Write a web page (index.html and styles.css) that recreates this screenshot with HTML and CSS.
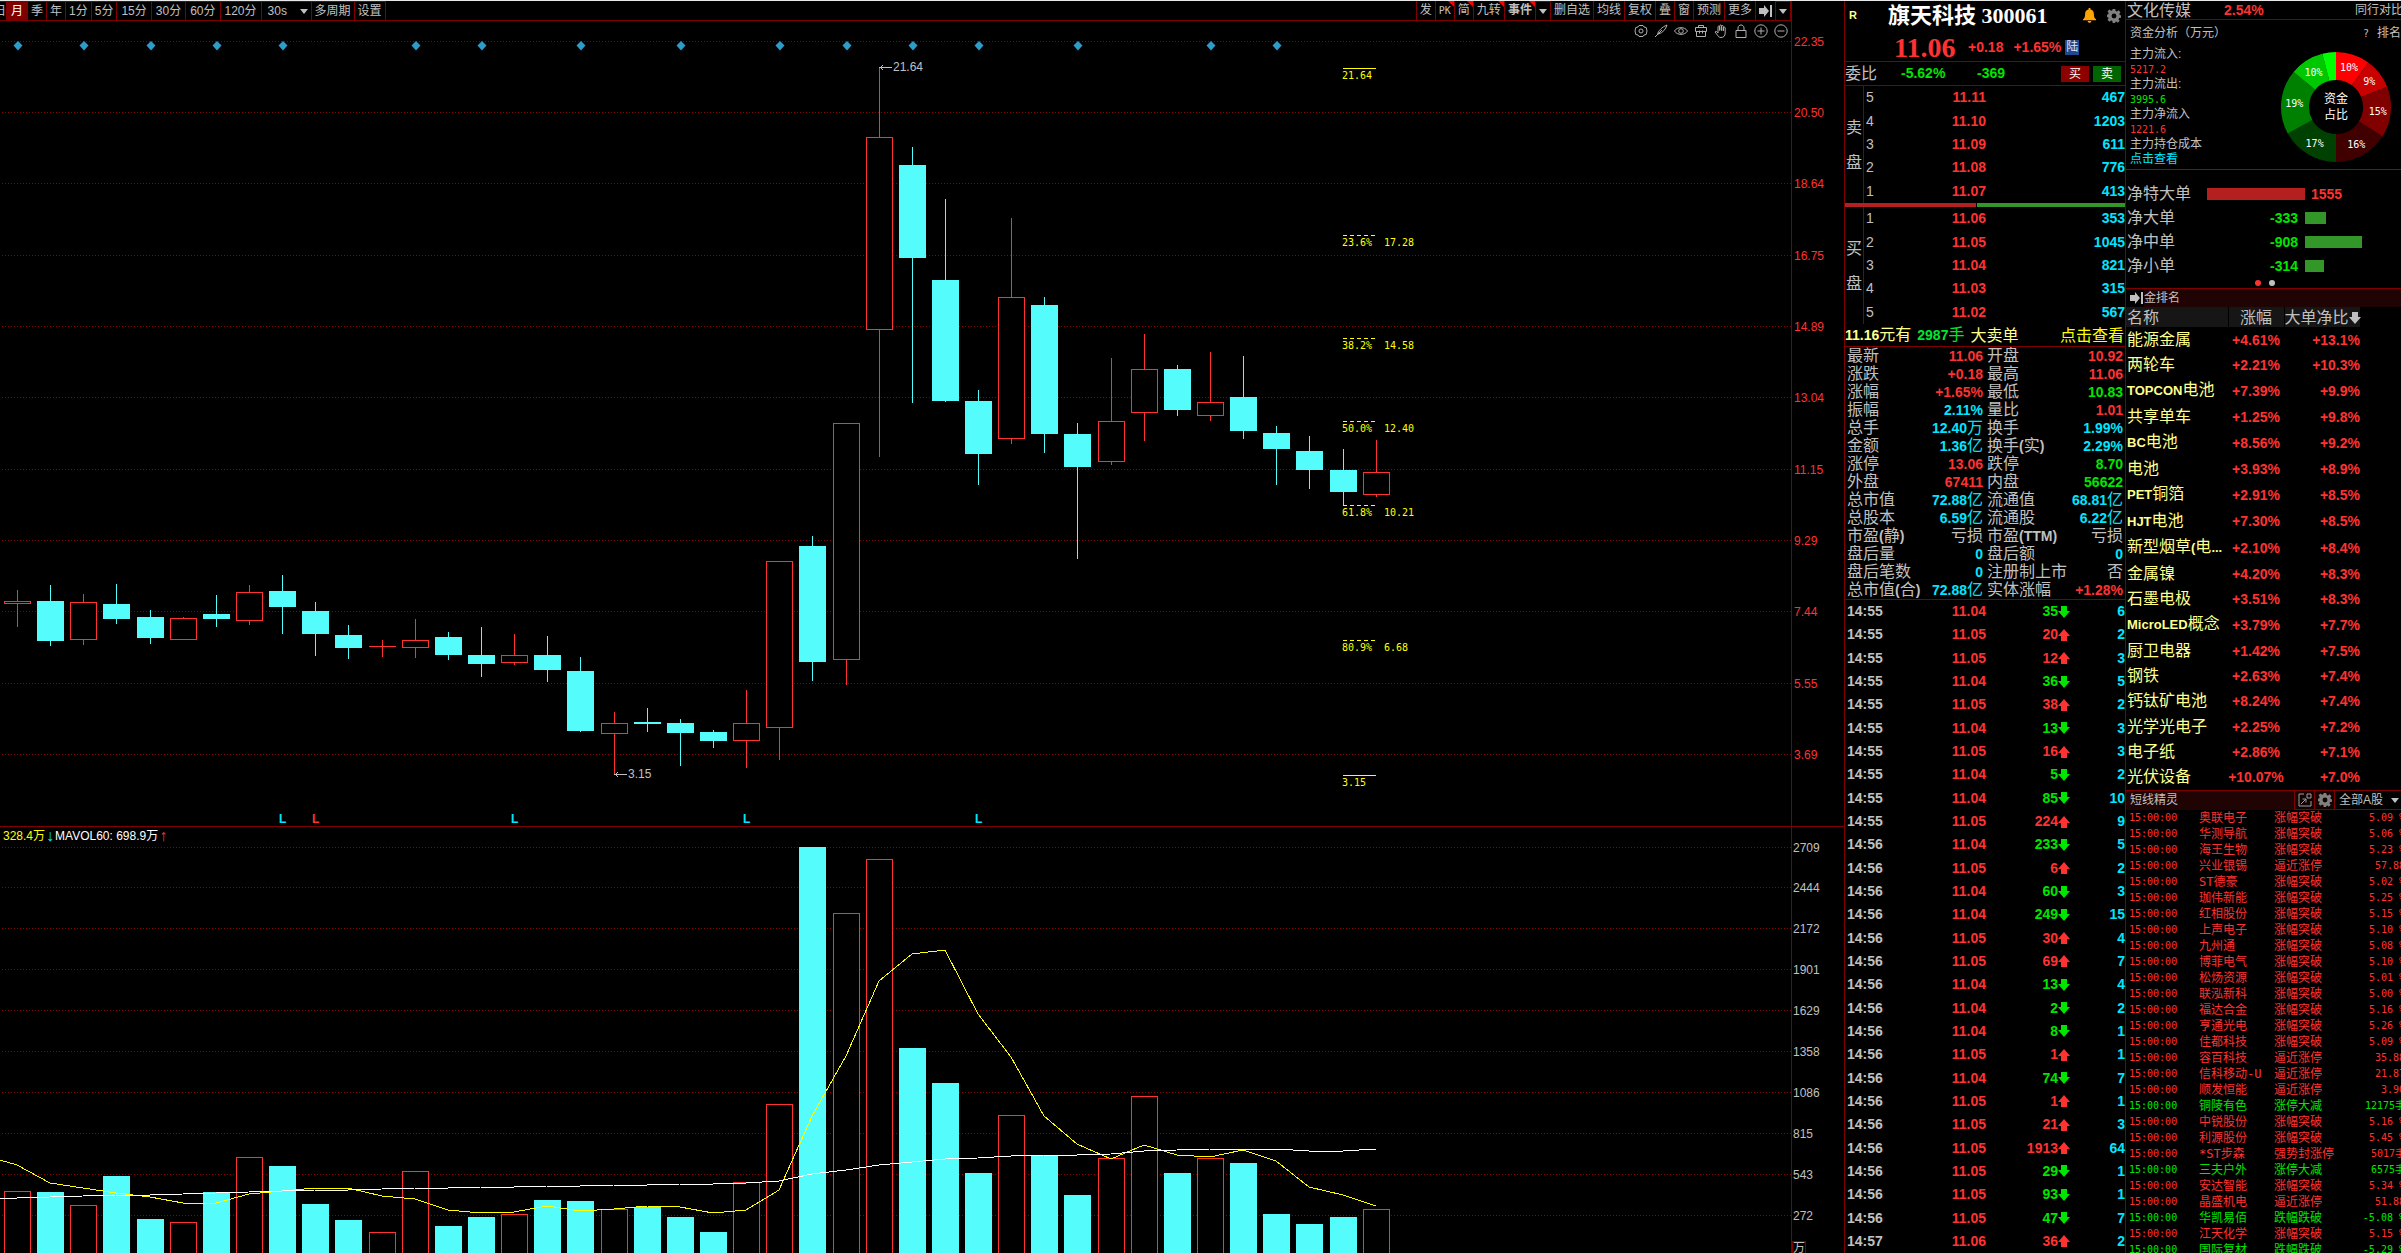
FILE: index.html
```html
<!DOCTYPE html>
<html lang="zh-CN">
<head>
<meta charset="utf-8">
<title>旗天科技 300061</title>
<link rel="stylesheet" href="styles.css">
</head>
<body>
<svg class="defs" aria-hidden="true">
  <symbol id="caret" viewBox="0 0 8 5"><path d="M0 0h8L4 5z"/></symbol>
  <symbol id="to-end" viewBox="0 0 13 12"><path d="M0 3h5V0l5 6-5 6V9H0zM11 0h2v12h-2z"/></symbol>
  <symbol id="down" viewBox="0 0 12 12"><path d="M3 0h6v5h3l-6 7-6-7h3z"/></symbol>
  <symbol id="up" viewBox="0 0 12 12"><path d="M3 12h6V7h3L6 0 0 7h3z"/></symbol>
  <symbol id="gear" viewBox="0 0 16 16"><path fill-rule="evenodd" d="M6.500 0h3l.4 2.200 1.500.6 1.900-1.300 2.100 2.100-1.300 1.900.6 1.500L16 7v3l-2.200.4-.6 1.200 1.300 1.900-2.100 2.100-1.900-1.300-1.200.5L9.500 16h-3l-.4-2.200-1.500-.6-1.900 1.300L.6 12.400l1.300-1.900-.6-1.100L0 9.500v-3l1.400-.4.5-1.500L.6 2.700 2.700.6l1.900 1.300L6.100 1.300zM8 5.200a2.800 2.800 0 1 0 0 5.600 2.800 2.800 0 0 0 0-5.600z"/></symbol>
</svg>
<main class="terminal">
  <section class="chart">
    <div class="chart-main">
      <nav class="toolbar">
        <button class="cut"><span>日</span></button><button class="active">月</button><button class="tight">季</button><button class="tight">年</button><button class="tight">1分</button><button class="tight">5分</button><button>15分</button><button>30分</button><button>60分</button><button>120分</button><button class="seconds">30s<svg class="caret"><use href="#caret"/></svg></button><button class="tight">多周期</button><button class="tight">设置</button>
        <div class="tools">
          <button>发</button><button class="hot mono">PK</button><button class="hot">简</button><button class="hot">九转</button><button class="hot strong">事件</button><button class="drop" aria-label="事件菜单"><svg class="caret"><use href="#caret"/></svg></button><button>删自选</button><button>均线</button><button>复权</button><button>叠</button><button>窗</button><button>预测</button><button>更多</button><button aria-label="收起"><svg class="end"><use href="#to-end"/></svg></button><button class="drop" aria-label="菜单"><svg class="caret"><use href="#caret"/></svg></button>
        </div>
      </nav>
    </div>
    <div class="pane price-pane">
      <svg class="plot" id="price-plot"></svg>
      <svg class="axis axis-red" id="price-axis"></svg>
      <div class="draw-tools">
        <svg viewBox="0 0 14 14"><path d="M5 1.500h4l1 1.500 2.200.5.8 3.500-.8 3.500L10 11l-1 1.500H5L4 11l-2.200-.5L1 7l.8-3.500L4 3z"/><circle cx="7" cy="7" r="2"/></svg>
        <svg viewBox="0 0 14 14"><path d="M1 13l3-3M3.500 10.500C4 7 8 3 13 1c-1 4-4.500 8-8.500 9zM4 10l4-4"/></svg>
        <svg viewBox="0 0 14 14"><path d="M.5 7C3 2.500 11 2.500 13.500 7 11 11.500 3 11.500.5 7z"/><circle cx="7" cy="7" r="2.300"/></svg>
        <svg viewBox="0 0 14 14"><path d="M1.500 3.500h11v4h-11zM2.500 7.500v5h9v-5M4.500 3.500v-2h5v2M5.500 6.500v3M8.500 6.500v3"/></svg>
        <svg viewBox="0 0 14 14"><path d="M4 9V3c0-1.300 1.700-1.300 1.700 0v3.500V2c0-1.300 1.800-1.300 1.800 0v4.500V2.500c0-1.300 1.800-1.300 1.800 0v4.500V4c0-1.300 1.900-1.300 1.900 0v5c0 3-1.700 4.500-4.200 4.500-2 0-2.700-1-3.500-2.300L1 8c.8-1.200 2-.6 3 1z"/></svg>
        <svg viewBox="0 0 14 14"><path d="M2 6.500h10v7H2zM4 6.500V4c0-4 6-4 6 0v2.500"/></svg>
        <svg viewBox="0 0 14 14"><circle cx="7" cy="7" r="6.200"/><path d="M3.500 7h7M7 3.500v7"/></svg>
        <svg viewBox="0 0 14 14"><circle cx="7" cy="7" r="6.200"/><path d="M3.500 7h7"/></svg>
      </div>
    </div>
    <div class="pane volume-pane">
      <div class="volume-body">
        <p class="legend"><span class="y">328.4万</span><span class="arrow c">↓</span><span>MAVOL60: 698.9万</span><span class="arrow r">↑</span></p>
        <svg class="plot" id="volume-plot"></svg>
      </div>
      <svg class="axis axis-gray" id="volume-axis"></svg>
    </div>
  </section>

  <section class="quote">
    <header class="name-row">
      <b class="flag">R</b>
      <h1>旗天科技 300061</h1>
      <svg class="bell" viewBox="0 0 14 16"><path d="M6 0h2v1.500c2.500.5 3.700 2.300 3.700 4.500C11.700 9.500 12.500 11 14 12v1H0v-1c1.500-1 2.300-2.500 2.300-6C2.300 3.800 3.500 2 6 1.500zM5 14h4c0 2.500-4 2.500-4 0z"/></svg>
      <svg class="cog"><use href="#gear"/></svg>
    </header>
    <div class="last-row"><span class="last">11.06</span><b>+0.18</b><b>+1.65%</b><span class="badge">陆</span></div>
    <div class="ratio-row"><span class="label">委比</span><b class="g pct">-5.62%</b><b class="g diff">-369</b><button class="buy">买</button><button class="sell">卖</button></div>
    <div class="ladder"><div class="side"><span>卖</span><span>盘</span></div><div class="levels" id="asks"></div></div>
    <div class="balance"><i></i></div>
    <div class="ladder"><div class="side"><span>买</span><span>盘</span></div><div class="levels" id="bids"></div></div>
    <div class="alert"><span><b>11.16</b>元有</span><span class="g"><b>2987</b>手</span><span>大卖单</span><a href="#">点击查看</a></div>
    <table class="stats" id="stats"></table>
    <div class="ticks" id="ticks"></div>
  </section>

  <section class="side-panel"><div class="side-inner">
    <div class="sector"><span>文化传媒</span><b class="r">2.54%</b><a href="#">同行对比</a></div>
    <div class="funds">
      <div class="funds-title"><span>资金分析（万元）</span><span class="mono">?</span><a href="#">排名</a></div>
      <div class="funds-body">
        <dl>
          <dt>主力流入:</dt><dd class="r">5217.2</dd>
          <dt>主力流出:</dt><dd class="g">3995.6</dd>
          <dt>主力净流入</dt><dd class="r">1221.6</dd>
          <dt>主力持仓成本</dt><dd><a href="#">点击查看</a></dd>
        </dl>
        <svg class="donut" id="donut" viewBox="-56 -56 112 112"></svg>
      </div>
    </div>
    <div class="flows" id="flows"></div>
    <div class="dots"><i class="on"></i><i></i></div>
    <div class="rank-title"><span class="rank-icon"><svg class="end"><use href="#to-end"/></svg></span><span>金排名</span></div>
    <table class="rank">
      <thead><tr><th class="n">名称</th><th class="p">涨幅</th><th class="v">大单净比<svg><use href="#down"/></svg></th><th></th></tr></thead>
      <tbody id="rank"></tbody>
    </table>
    <div class="sprite-head"><span class="sprite-title">短线精灵</span>
      <button aria-label="展开"><svg viewBox="0 0 14 14"><path d="M6 1H1v12h12V8M9 1h4v4H9zM3 11l5-5M4.500 6H8v3.500"/></svg></button>
      <button aria-label="设置"><svg class="cog"><use href="#gear"/></svg></button>
      <label><select aria-label="范围"><option>全部A股</option></select><svg class="caret"><use href="#caret"/></svg></label>
    </div>
    <table class="sprite" id="sprite"></table>
  </div></section>
</main>
<script src="app.js"></script>
</body>
</html>
```
FILE: styles.css
```css
:root {
  --line: #800000;
  --red: #ff3232;
  --green: #00e600;
  --cyan: #00e6ff;
  --gray: #c0c0c0;
  --pale: #ffff8c;
  --sans: "Liberation Sans", "Noto Sans CJK SC", sans-serif;
  --mono: "DejaVu Sans Mono", "Noto Sans CJK SC", monospace;
}
* { box-sizing: border-box; margin: 0; padding: 0; }
html, body { height: 100%; }
body { background: #000; color: var(--gray); font: 12px/15px var(--sans); overflow: hidden; }
button { background: none; border: 0; color: inherit; font: inherit; cursor: pointer; }
a { color: inherit; text-decoration: none; }
table { border-collapse: collapse; }
svg { display: block; flex: none; fill: currentColor; }
.defs { position: absolute; width: 0; height: 0; }
.r { color: var(--red); }
.g { color: var(--green); }
.c { color: var(--cyan); }
.y { color: #ff0; }
.mono { font-family: var(--mono); font-size: 10px; }
.caret { width: 8px; height: 5px; }
.end { width: 13px; height: 12px; }

.terminal { display: flex; height: 100vh; border-top: 1px solid #e8e8e8; }

/* chart */
.chart { flex: 1; min-width: 0; display: grid; grid-template-rows: 20px 806fr 426fr; }
.chart-main { margin-right: 52px; border-right: 1px solid var(--line); }
.toolbar { display: flex; height: 20px; border-bottom: 1px solid var(--line); white-space: nowrap; }
.toolbar button { display: flex; align-items: center; justify-content: center; height: 19px; padding: 0 4px; border-right: 1px solid var(--line); border-top: 1px solid var(--line); }
.toolbar .tight { padding: 0 3px; }
.toolbar .cut { width: 7px; padding: 0; justify-content: flex-end; overflow: hidden; }
.toolbar .active { background: var(--line); color: #fff; }
.toolbar .seconds { width: 50px; padding: 0 3px 0 6px; justify-content: space-between; }
.tools { display: flex; margin-left: auto; border-left: 1px solid var(--line); }
.toolbar .tools button { padding: 0 3px; border-top: 0; position: relative; }
.toolbar .tools .drop { padding: 0 3px; border-top: 1px solid var(--line); }
.tools .mono { font-size: 10px; }
.tools .strong { font-weight: 700; }
.hot::after { content: ""; position: absolute; top: 0; right: 0; border: 3px solid; border-color: red red transparent transparent; }

.pane { display: grid; grid-template-columns: minmax(0, 1fr) 53px; min-height: 0; position: relative; }
.price-pane { border-bottom: 1px solid var(--line); }
.plot, .axis { width: 100%; height: 100%; overflow: hidden; shape-rendering: crispEdges; }
.axis { border-left: 1px solid var(--line); font-size: 12px; }
.axis-red { fill: var(--red); }
.axis-gray { fill: var(--gray); }
.volume-body { display: grid; grid-template-rows: 18px minmax(0, 1fr); min-width: 0; min-height: 0; }
.legend { display: flex; padding: 1px 3px; line-height: 16px; color: #fff; white-space: nowrap; }
.arrow { width: 10px; text-align: center; font-size: 16px; }
.grid { stroke: #8c0000; stroke-dasharray: 1 2; }
.up { fill: #000; stroke: var(--red); }
.down { fill: #54fcfc; stroke: #54fcfc; }
.wick-up { stroke: var(--red); }
.wick-down { stroke: #54fcfc; }
.ma-fast { fill: none; stroke: #ff0; }
.ma-slow { fill: none; stroke: #fff; }
.event { fill: #2c9cc8; shape-rendering: auto; }
.mark { font-weight: 700; font-size: 12px; }
.mark-c { fill: var(--cyan); }
.mark-r { fill: var(--red); }
.fib { fill: #ff0; font: 10px var(--mono); }
.fib-line { stroke: #ff0; }
.fib-dash { stroke-dasharray: 4 3; }
.callout { fill: var(--gray); font-size: 12px; }
.callout-line { stroke: var(--gray); fill: none; }
.unit { fill: none; stroke: var(--line); }
.draw-tools { position: absolute; right: 56px; top: 3px; display: flex; gap: 6px; }
.draw-tools svg { width: 14px; height: 14px; fill: none; stroke: #b0b0b0; }

/* quote */
.quote { width: 282px; flex: none; display: flex; flex-direction: column; border-left: 1px solid var(--line); border-right: 1px solid var(--line); min-height: 0; white-space: nowrap; }
.quote b { font-size: 14px; }
.name-row { display: flex; align-items: center; height: 29px; padding: 0 4px; }
.quote .flag { font-size: 11px; color: var(--pale); width: 39px; }
h1 { flex: 1; font: 700 22px/28px "Liberation Serif", "Noto Sans CJK SC", serif; color: #fff; }
.bell { width: 13px; height: 15px; fill: #ffa500; margin-right: 11px; }
.cog { width: 14px; height: 14px; color: #808080; }
.last-row { display: flex; align-items: center; gap: 10px; height: 32px; padding: 4px 0 0 49px; border-bottom: 1px solid var(--line); color: var(--red); }
.last { width: 64px; font: 700 28px/28px "Liberation Serif", serif; }
.badge { background: #204890; color: #dce4f4; line-height: 15px; padding: 0 1px; margin-left: -6px; }
.ratio-row { display: flex; align-items: center; height: 24px; border-bottom: 1px solid var(--line); }
.label { font-size: 16px; width: 56px; }
.pct { width: 76px; }
.diff { flex: 1; }
.buy, .sell { width: 28px; height: 16px; line-height: 16px; color: #fff; margin-right: 4px; }
.buy { background: #8c0000; }
.sell { background: #006400; }
.ladder { display: flex; height: 117px; flex: none; }
.side { width: 19px; border-right: 1px solid var(--line); font-size: 16px; display: flex; flex-direction: column; align-items: center; justify-content: center; gap: 20px; }
.levels { flex: 1; display: flex; flex-direction: column; }
.level { flex: 1; display: grid; grid-template-columns: 60px 60px 1fr; align-items: center; padding-left: 2px; }
.level b:first-child { font-weight: 400; }
.level b:nth-child(n+2) { text-align: right; }
.balance { height: 4px; flex: none; background: #329628; }
.balance i { display: block; width: 47%; height: 4px; background: #b42020; border-right: 1px solid #000; }
.alert { display: flex; gap: 6px; align-items: center; height: 23px; flex: none; border-bottom: 1px solid var(--line); font-size: 16px; color: var(--pale); }
.alert .g { color: #00e632; }
.alert a { margin-left: auto; color: #ff0; padding-right: 1px; }
.stats { width: 280px; table-layout: fixed; border-bottom: 1px solid var(--line); font-size: 16px; flex: none; }
.stats tr { height: 18px; }
.stats th, .stats td { line-height: 18px; font-weight: 400; }
.stats th { text-align: left; width: 70px; padding-left: 2px; }
.stats td { text-align: right; padding-right: 2px; width: 70px; }
.ticks { flex: 1; min-height: 0; display: grid; grid-auto-rows: minmax(0, 1fr); }
.tick { display: grid; grid-template-columns: 64px 75px 72px 12px 1fr; align-items: center; padding-left: 2px; }
.tick b { text-align: right; }
.tick b:first-child { text-align: left; }
.tick svg { width: 12px; height: 12px; }

/* side panel */
.side-panel { width: 275px; flex: none; overflow: hidden; }
.side-inner { width: 279px; height: 100%; display: flex; flex-direction: column; white-space: nowrap; }
.side-inner b { font-size: 14px; }
.sector { display: flex; align-items: center; height: 19px; flex: none; border-bottom: 1px solid var(--line); font-size: 16px; padding: 0 2px 0 1px; }
.sector b { margin-left: 33px; }
.sector a { margin-left: auto; font-size: 12px; }
.funds { height: 150px; flex: none; border-bottom: 1px solid #303030; padding-left: 4px; }
.funds-title { display: flex; height: 27px; align-items: center; padding-right: 4px; }
.funds-title .mono { margin: 0 8px 0 auto; }
.funds-body { display: flex; }
dl { width: 150px; }
dd { font: 10px/15px var(--mono); }
dd a { font-size: 12px; color: var(--cyan); }
.donut { width: 112px; height: 112px; margin-top: 4px; font-size: 12px; }
.donut text { fill: #fff; text-anchor: middle; }
.donut .value { font: 10px var(--mono); }
.flows { padding-top: 12px; flex: none; }
.flow { display: grid; grid-template-columns: 80px 91px 7px 1fr; height: 24px; align-items: center; font-size: 16px; padding-left: 1px; line-height: 24px; }
.flow b { text-align: right; }
.flow i { height: 12px; display: block; }
.flow.pos { grid-template-columns: 80px 98px 6px 1fr; }
.flow.pos b { text-align: left; }
.bar-r { background: #b42020; }
.bar-g { background: #329628; }
.dots { display: flex; gap: 8px; height: 10px; align-items: center; padding-left: 129px; flex: none; }
.dots i { width: 6px; height: 6px; border-radius: 3px; background: var(--gray); }
.dots .on { background: var(--red); }
.rank-title { display: flex; align-items: center; height: 19px; flex: none; border-top: 1px solid var(--line); background: #200404; }
.rank-icon { display: flex; align-items: center; background: #000; width: 18px; height: 18px; padding-left: 4px; }
.rank { width: 279px; height: 483px; flex: none; table-layout: fixed; }
.rank thead tr { height: 20px; }
.rank th { font: 400 16px/19px var(--sans); background: #161616; border-right: 1px solid #000; }
.rank .n { width: 102px; text-align: left; padding-left: 1px; }
.rank .p { width: 56px; text-align: center; }
.rank .v { width: 76px; text-align: left; }
.rank th:last-child { background: #000; border: 0; }
.rank .v svg { display: inline-block; width: 12px; height: 12px; vertical-align: -1px; }
.rank td { font-size: 16px; line-height: 20px; color: var(--pale); padding-left: 1px; }
.rank td:first-child b { font-size: 13px; }
.rank td:nth-child(2) { text-align: center; color: var(--red); padding: 0; }
.rank td:nth-child(3) { text-align: right; color: var(--red); }
.sprite-head { display: flex; height: 20px; flex: none; border-top: 1px solid var(--line); background: #200404; align-items: center; }
.sprite-title { flex: 1; padding-left: 4px; }
.sprite-head button { width: 20px; height: 19px; border-left: 1px solid var(--line); border-bottom: 1px solid var(--line); background: #120202; padding-left: 3px; }
.sprite-head button svg { width: 14px; height: 14px; }
.sprite-head button svg:not(.cog) { fill: none; stroke: #a0a0a0; }
.sprite-head label { display: flex; align-items: center; width: 71px; height: 19px; background: #000; border-left: 1px solid var(--line); border-bottom: 1px solid var(--line); padding-left: 4px; }
.sprite-head select { appearance: none; background: #000; color: var(--gray); border: 0; font: 12px/16px var(--sans); width: 52px; }
.sprite { width: 279px; table-layout: fixed; }
.sprite tr { height: 16px; }
.sprite td { font: 12px/16px var(--mono); }
.sprite td:nth-child(1) { width: 73px; padding-left: 3px; font-size: 10px; }
.sprite td:nth-child(2) { width: 75px; }
.sprite td:nth-child(3) { width: 70px; }
.sprite td:nth-child(4) { text-align: right; font-size: 10px; }
```
FILE: app.js
```js
const $ = id => document.getElementById(id);
// Latin runs are set in the bold face, Chinese stays regular.
const mix = t => t.replace(/[\x21-\x7e]+/g, '<b>$&</b>');

/* ---- price and volume charts ---- */
const PRICE_TOP = 21, VOLUME_TOP = 845, AXIS_TOP = 827;
const center = i => Math.round(17 + 33.14 * i);

// [rising, high, bodyTop, bodyBottom, low, volumeTop]
const candles = [
  [1,590,601,603,627,1191],[0,585,601,641,646,1192],[1,594,602,639,645,1205],[0,584,604,619,624,1176],
  [0,610,617,638,644,1219],[1,617,618,639,639,1222],[0,595,614,619,627,1192],[1,585,592,620,625,1157],
  [0,575,591,607,634,1166],[0,602,611,634,656,1204],[0,625,635,648,659,1220],[1,640,646,646,657,1232],
  [1,619,640,647,658,1171],[0,632,637,655,660,1226],[0,627,655,664,677,1217],[1,634,655,662,665,1214],
  [0,636,655,670,682,1200],[0,657,671,731,732,1201],[1,712,723,733,775,1209],[0,708,722,724,732,1207],
  [0,719,723,733,766,1217],[0,730,732,741,748,1232],[1,690,723,740,768,1182],[1,561,561,727,760,1104],
  [0,536,546,662,681,847],[1,423,423,659,685,913],[1,67,137,329,457,859],[0,147,165,258,403,1048],
  [0,199,280,401,402,1083],[0,390,401,454,485,1173],[1,218,297,438,444,1115],[0,297,305,434,453,1155],
  [0,423,434,467,559,1195],[1,358,421,461,465,1158],[1,334,369,412,441,1096],[0,365,369,410,416,1173],
  [1,352,402,415,421,1158],[0,356,397,431,439,1163],[0,426,433,449,485,1214],[0,436,451,470,489,1224],
  [0,449,470,492,505,1217],[1,440,472,494,497,1209]
];
const fast = [1165,1183,1188,1193,1197,1203,1203,1194,1191,1188,1188,1196,1199,1210,1213,1212,1206,1211,1209,1206,1207,1213,1210,1190,1116,1056,981,954,950,1014,1057,1116,1144,1159,1145,1155,1157,1150,1161,1187,1195,1206];
const slow = [1198,1197,1196,1195,1195,1194,1193,1192,1191,1190,1190,1189,1188,1188,1187,1187,1186,1186,1185,1185,1184,1184,1183,1181,1174,1170,1165,1162,1159,1158,1156,1155,1155,1154,1151,1150,1149,1149,1149,1151,1151,1149];
const priceGrid = [[41,'22.35'],[112,'20.50'],[183,'18.64'],[255,'16.75'],[326,'14.89'],[397,'13.04'],[469,'11.15'],[540,'9.29'],[611,'7.44'],[683,'5.55'],[754,'3.69']];
const volumeGrid = [[847,2709],[887,2444],[928,2172],[969,1901],[1010,1629],[1051,1358],[1092,1086],[1133,815],[1174,543],[1215,272]];
const fib = [[68,'21.64','',1],[235,'23.6%','17.28'],[338,'38.2%','14.58'],[421,'50.0%','12.40'],[505,'61.8%','10.21'],[640,'80.9%','6.68'],[775,'3.15','',1]];
const events = [0,2,4,6,8,12,14,17,20,23,25,27,29,32,36,38];
const marks = [[8,'c'],[9,'r'],[15,'c'],[22,'c'],[29,'c']];

const gridLines = rows => rows.map(([y]) => `<line class="grid" x1="2" x2="100%" y1="${y + .5}" y2="${y + .5}"/>`).join('');
const body = (i, up, top, bottom) => `<rect class="${up ? 'up' : 'down'}" x="${center(i) - 12.5}" y="${top + .5}" width="26" height="${Math.max(bottom - top - (up ? 0 : 1), .01)}"/>`;
const wick = (i, up, a, b) => b > a ? `<line class="wick-${up ? 'up' : 'down'}" x1="${center(i) + .5}" x2="${center(i) + .5}" y1="${a}" y2="${b}"/>` : '';
const callout = (i, y, t) => `<path class="callout-line" d="M${center(i) + 13} ${y + .5}H${center(i) + 1}m3-2l-3 2 3 2"/><text class="callout" x="${center(i) + 14}" y="${y + 4}">${t}</text>`;

$('price-plot').innerHTML = `<g transform="translate(0 ${-PRICE_TOP})">` + gridLines(priceGrid) +
  candles.map(([up, h, t, b, l], i) => wick(i, up, h, t) + wick(i, up, b, l) + body(i, up, t, b)).join('') +
  events.map(i => `<path class="event" d="M${center(i) + 1} 41l4.500 4.500-4.500 5-4.500-5z"/>`).join('') +
  marks.map(([i, c]) => `<text class="mark mark-${c}" x="${center(i) - 3}" y="823">L</text>`).join('') +
  fib.map(([y, a, b, solid]) => `<line class="fib-line${solid ? '' : ' fib-dash'}" x1="1343" x2="1376" y1="${y + .5}" y2="${y + .5}"/><text class="fib" x="1342" y="${y + 11}">${a}</text><text class="fib" x="1384" y="${y + 11}">${b}</text>`).join('') +
  callout(26, 67, '21.64') + callout(18, 774, '3.15') + '</g>';
$('price-axis').innerHTML = priceGrid.map(([y, t]) => `<text x="2" y="${y + 5 - PRICE_TOP}">${t}</text>`).join('');

const path = (start, ys) => `M0 ${start}` + ys.map((y, i) => `L${center(i)} ${y}`).join('');
$('volume-plot').innerHTML = `<g transform="translate(0 ${-VOLUME_TOP})">` + gridLines(volumeGrid) +
  candles.map(([up, , , , , v], i) => body(i, up, v, 1300)).join('') +
  `<path class="ma-fast" d="${path(1160, fast)}"/><path class="ma-slow" d="${path(1199, slow)}"/></g>`;
$('volume-axis').innerHTML = volumeGrid.map(([y, t]) => `<text x="1" y="${y + 5 - AXIS_TOP}">${t}</text>`).join('') +
  `<rect class="unit" x="0.500" y="414.500" width="13" height="14"/><text x="1" y="425">万</text>`;

/* ---- order book ---- */
const level = (n, p, v) => `<div class="level"><b>${n}</b><b class="r">${p}</b><b class="c">${v}</b></div>`;
$('asks').innerHTML = [[5,'11.11',467],[4,'11.10',1203],[3,'11.09',611],[2,'11.08',776],[1,'11.07',413]].map(r => level(...r)).join('');
$('bids').innerHTML = [[1,'11.06',353],[2,'11.05',1045],[3,'11.04',821],[4,'11.03',315],[5,'11.02',567]].map(r => level(...r)).join('');

$('stats').innerHTML = [
  ['最新','r11.06','开盘','r10.92'],['涨跌','r+0.18','最高','r11.06'],['涨幅','r+1.65%','最低','g10.83'],
  ['振幅','c2.11%','量比','r1.01'],['总手','c12.40万','换手','c1.99%'],['金额','c1.36亿','换手(实)','c2.29%'],
  ['涨停','r13.06','跌停','g8.70'],['外盘','r67411','内盘','g56622'],['总市值','c72.88亿','流通值','c68.81亿'],
  ['总股本','c6.59亿','流通股','c6.22亿'],['市盈(静)','n亏损','市盈(TTM)','n亏损'],['盘后量','c0','盘后额','c0'],
  ['盘后笔数','c0','注册制上市','n否'],['总市值(合)','c72.88亿','实体涨幅','r+1.28%']
].map(([a, x, b, y]) => `<tr><th>${mix(a)}</th><td class="${x[0]}">${mix(x.slice(1))}</td><th>${mix(b)}</th><td class="${y[0]}">${mix(y.slice(1))}</td></tr>`).join('');

// [minute, price, volume, up, count]
$('ticks').innerHTML = [
  [55,'04',35,0,6],[55,'05',20,1,2],[55,'05',12,1,3],[55,'04',36,0,5],[55,'05',38,1,2],[55,'04',13,0,3],[55,'05',16,1,3],
  [55,'04',5,0,2],[55,'04',85,0,10],[55,'05',224,1,9],[56,'04',233,0,5],[56,'05',6,1,2],[56,'04',60,0,3],[56,'04',249,0,15],
  [56,'05',30,1,4],[56,'05',69,1,7],[56,'04',13,0,4],[56,'04',2,0,2],[56,'04',8,0,1],[56,'05',1,1,1],[56,'04',74,0,7],
  [56,'05',1,1,1],[56,'05',21,1,3],[56,'05',1913,1,64],[56,'05',29,0,1],[56,'05',93,0,1],[56,'05',47,0,7],[57,'06',36,1,2]
].map(([t, p, v, up, n]) => `<div class="tick"><b>14:${t}</b><b class="r">11.${p}</b><b class="${up ? 'r' : 'g'}">${v}</b><svg class="${up ? 'r' : 'g'}"><use href="#${up ? 'up' : 'down'}"/></svg><b class="c">${n}</b></div>`).join('');

/* ---- money flow ---- */
const slices = [[10,'#f00','10%'],[9,'#c80000','9%'],[15,'#800000','15%'],[16,'#400000','16%'],[17,'#004000','17%'],[19,'#008000','19%'],[10,'#00c800','10%'],[4,'#0f0','']];
let turn = 0;
const at = (f, r) => `${(r * Math.sin(f * 2 * Math.PI)).toFixed(2)} ${(-r * Math.cos(f * 2 * Math.PI)).toFixed(2)}`;
$('donut').innerHTML = slices.map(([n, color, label]) => {
  const a = turn, b = turn += n / 100;
  const [x, y] = at((a + b) / 2, 42).split(' ');
  return `<path fill="${color}" d="M${at(a, 27)}L${at(a, 55)}A55 55 0 0 1 ${at(b, 55)}L${at(b, 27)}A27 27 0 0 0 ${at(a, 27)}"/><text class="value" x="${x}" y="${+y + 4}">${label}</text>`;
}).join('') + '<text y="-4">资金</text><text y="12">占比</text>';

$('flows').innerHTML = '<div class="flow pos"><span>净特大单</span><i class="bar-r" style="width:98px"></i><span></span><b class="r">1555</b></div>' +
  [['净大单',-333,21],['净中单',-908,57],['净小单',-314,19]].map(([n, v, w]) => `<div class="flow"><span>${n}</span><b class="g">${v}</b><span></span><i class="bar-g" style="width:${w}px"></i></div>`).join('');

$('rank').innerHTML = [
  ['能源金属',4.61,'13.1'],['两轮车',2.21,'10.3'],['TOPCON电池',7.39,'9.9'],['共享单车',1.25,'9.8'],['BC电池',8.56,'9.2'],
  ['电池',3.93,'8.9'],['PET铜箔',2.91,'8.5'],['HJT电池',7.30,'8.5'],['新型烟草(电...',2.10,'8.4'],['金属镍',4.20,'8.3'],
  ['石墨电极',3.51,'8.3'],['MicroLED概念',3.79,'7.7'],['厨卫电器',1.42,'7.5'],['钢铁',2.63,'7.4'],['钙钛矿电池',8.24,'7.4'],
  ['光学光电子',2.25,'7.2'],['电子纸',2.86,'7.1'],['光伏设备',10.07,'7.0']
].map(([n, p, v]) => `<tr><td>${mix(n)}</td><td><b>+${p.toFixed(2)}%</b></td><td><b>+${v}%</b></td><td></td></tr>`).join('');

const J = '涨幅突破', B = '逼近涨停', D = '涨停大减';
$('sprite').innerHTML = [
  ['奥联电子',J,'5.09 %'],['华测导航',J,'5.06 %'],['海王生物',J,'5.23 %'],['兴业银锡',B,'57.88'],['ST德豪',J,'5.02 %'],['珈伟新能',J,'5.25 %'],
  ['红相股份',J,'5.15 %'],['上声电子',J,'5.10 %'],['九州通',J,'5.08 %'],['博菲电气',J,'5.10 %'],['松炀资源',J,'5.01 %'],['联泓新科',J,'5.00 %'],
  ['福达合金',J,'5.16 %'],['亨通光电',J,'5.26 %'],['佳都科技',J,'5.09 %'],['容百科技',B,'35.88'],['信科移动-U',B,'21.87'],['顺发恒能',B,'3.90'],
  ['铜陵有色',D,'12175手',1],['中锐股份',J,'5.16 %'],['利源股份',J,'5.45 %'],['*ST步森','强势封涨停','5017手'],['三夫户外',D,'6575手',1],
  ['安达智能',J,'5.34 %'],['晶盛机电',B,'51.88'],['华凯易佰','跌幅跌破','-5.08 %',1],['江天化学',J,'5.15 %'],['国际复材','跌幅跌破','-5.29 %',1]
].map(([n, e, v, down]) => `<tr class="${down ? 'g' : 'r'}"><td>15:00:00</td><td>${n}</td><td>${e}</td><td>${v}</td></tr>`).join('');
```
